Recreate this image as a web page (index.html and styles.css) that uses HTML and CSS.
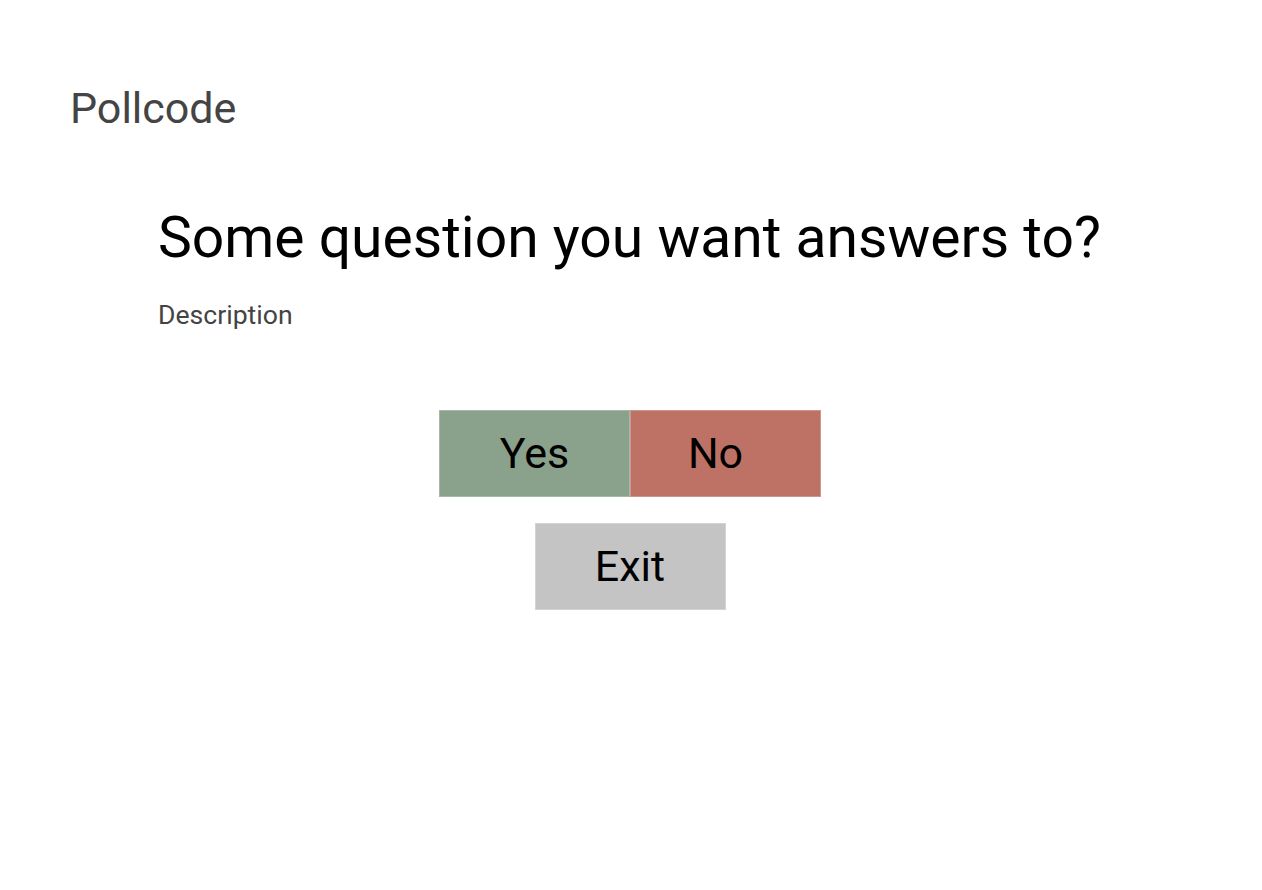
FILE: index.html
```html
<!DOCTYPE html>
<html lang="en">
<head>
<meta charset="utf-8">
<title>Pollcode</title>
<link rel="stylesheet" href="styles.css">
</head>
<body>
<header class="topbar">
  <div class="brand">Pollcode</div>
</header>
<main class="poll">
  <h1 class="question">Some question you want answers to?</h1>
  <p class="description">Description</p>
  <div class="actions">
    <div class="choices">
      <button class="btn btn-yes">Yes</button>
      <button class="btn btn-no">No</button>
    </div>
    <button class="btn btn-exit">Exit</button>
  </div>
</main>
</body>
</html>
```

FILE: styles.css
```css
html, body {
  margin: 0;
  padding: 0;
  background: #ffffff;
  font-family: Roboto, "Liberation Sans", sans-serif;
}

.topbar {
  padding: 83px 0 0 70px;
}

.brand {
  font-size: 43px;
  line-height: 50px;
  color: #444444;
}

.poll {
  padding: 71px 0 0 158px;
}

.question {
  margin: 0;
  font-weight: 400;
  font-size: 57px;
  line-height: 67px;
  color: #000000;
}

.description {
  margin: 28px 0 0;
  font-size: 26.6px;
  line-height: 32px;
  color: #444444;
}

.actions {
  margin: 79px 0 0 -158px;
  padding-right: 2px;
  display: flex;
  flex-direction: column;
  align-items: center;
  gap: 26px;
}

.choices {
  display: flex;
}

.btn {
  width: 191px;
  height: 87px;
  border: 1px solid rgba(255, 255, 255, 0.25);
  margin: 0;
  padding: 0 0 2px;
  font-family: Roboto, "Liberation Sans", sans-serif;
  font-size: 43px;
  color: #000000;
  cursor: pointer;
}

.btn-yes {
  background: #8aa18b;
}

.btn-no {
  background: #bd7265;
  padding-right: 20px;
}

.btn-exit {
  background: #c4c4c4;
}
```
